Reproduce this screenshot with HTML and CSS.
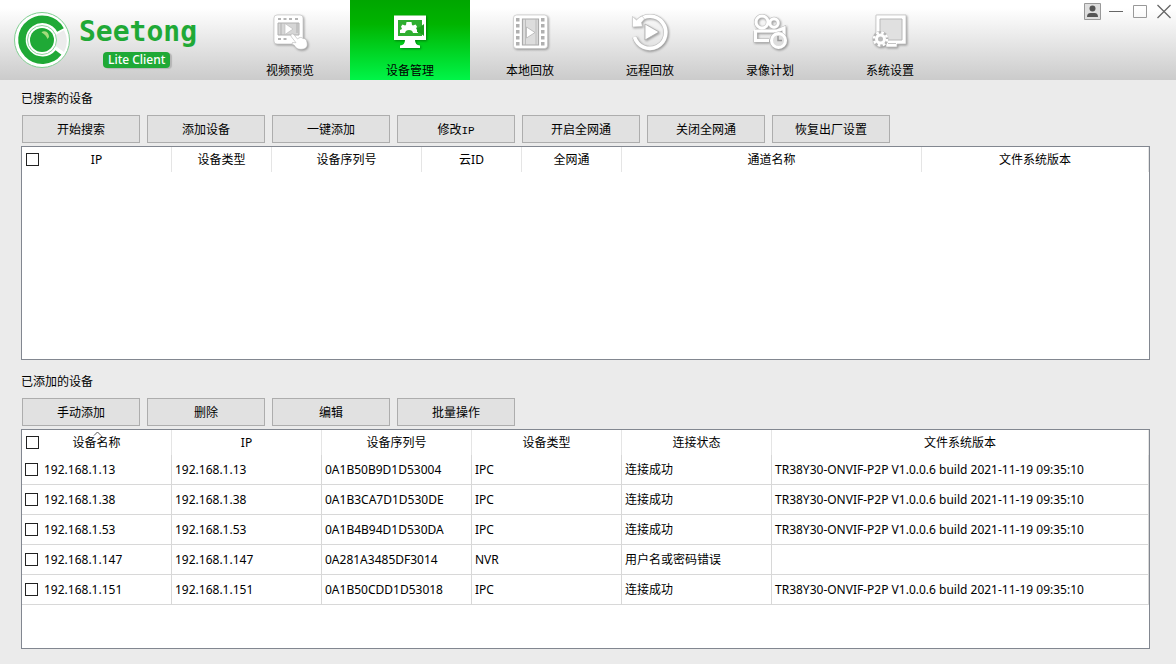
FILE: index.html
```html
<!DOCTYPE html>
<html lang="zh-CN">
<head>
<meta charset="utf-8">
<title>Seetong Lite Client</title>
<link rel="stylesheet" href="styles.css">
</head>
<body>
<header class="topbar">
  <div class="brand">
    <svg class="brand-mark" viewBox="0 0 56 56" aria-hidden="true">
      <circle cx="28" cy="28" r="27.5" fill="#fff" stroke="#7fcf90" stroke-width="1"/>
      <path d="M33 28 L50 18 A24 24 0 0 1 50 40 Z" fill="#ececec"/>
      <path d="M46.500 18 A20.500 20.500 0 1 0 44.500 40.500" fill="none" stroke="#1fa936" stroke-width="7.500"/>
      <circle cx="28" cy="28" r="14.5" fill="#fff" stroke="#8ed39c" stroke-width="1"/>
      <circle cx="28" cy="28" r="12" fill="#1fa936"/>
      <path d="M27.500 20.500 Q29 18.500 32 19.500 Q35 21 35 25 L33.500 27 Q32 22.500 27.500 20.500 Z" fill="#a5dc7c"/>
    </svg>
    <div class="brand-text">
      <span class="brand-name">Seetong</span>
      <span class="brand-tag">Lite Client</span>
    </div>
  </div>
  <nav class="nav">
    <button class="nav-item" type="button">
      <svg class="nav-icon" viewBox="0 0 48 48" aria-hidden="true">
        <rect x="8" y="7" width="29" height="29" rx="3" fill="#fff" stroke="#c4c4c4" stroke-width=".7"/>
        <path d="M12 10h3v2h-3zM17.500 10h3v2h-3zM23 10h3v2h-3zM29 10h3v2h-3zM12 30h3v2h-3zM17.500 30h3v2h-3z" fill="#b5b5b5"/>
        <path d="M12 15h21v12H12z" fill="#d6d6d6" stroke="#b0b0b0"/>
        <path d="M15 15v12M31 15v10" stroke="#b0b0b0"/>
        <path d="M19 15.500v11l8-5.500z" fill="#fff" stroke="#b5b5b5" stroke-width=".6"/>
        <path d="M25 26.500c1.500-1.500 3 0 4 1.500l2.500 3c2-2 4-2 5.500-.5 2.500 0 3.500 1 4 4 1 4-1 6-3.500 6.500-5 1-7.500-.5-9-3.500-1-1-3-1-2-3l3.500.2-4.500-5.700q-1-1-.5-2.500z" fill="#fff" stroke="#b5b5b5" stroke-width=".6"/>
      </svg>
      <span>视频预览</span>
    </button>
    <button class="nav-item active" type="button" aria-current="page">
      <svg class="nav-icon" viewBox="0 0 48 48" aria-hidden="true">
        <path d="M8 7.500h32v24.500H29q0 5 5 5.500v2.500H14v-2.500q5-.5 5-5.500H8z" fill="#fff"/>
        <path d="M12 12h24v16H12z" fill="#2fae30"/>
        <path d="M15 18.500l1.500-2 2.500 1 1-.5.500-3h5l.5 3 1 .5 2.500-1 1.500 2-1 2.500 2 1v3h-5q-.5-3-4-3t-4 3h-5v-3l2-1z" fill="#fff"/>
        <path d="M31 20l3-1 4-3v12l-4-3-3-1z" fill="#1a9f1c"/>
      </svg>
      <span>设备管理</span>
    </button>
    <button class="nav-item" type="button">
      <svg class="nav-icon" viewBox="0 0 48 48" aria-hidden="true">
        <rect x="7.500" y="7" width="34" height="33.500" rx="3" fill="#fff" stroke="#c4c4c4" stroke-width=".7"/>
        <path d="M16.500 11h16v26h-16z" fill="#ddd" stroke="#aaa" stroke-width="1.200"/>
        <path d="M19.500 11v26M30 11v26" stroke="#b5b5b5" stroke-width=".8"/>
        <path d="M10 10h3.500v3.500H10zM10 16h3.500v3.500H10zM10 22h3.500v3.500H10zM10 28h3.500v3.500H10zM10 34h3.500v3.500H10zM35 10h3.500v3.500H35zM35 16h3.500v3.500H35zM35 22h3.500v3.500H35zM35 28h3.500v3.500H35zM35 34h3.500v3.500H35z" fill="#b0b0b0"/>
        <path d="M20.500 19v11l8.500-5.500z" fill="#fff" stroke="#aaa" stroke-width=".7"/>
      </svg>
      <span>本地回放</span>
    </button>
    <button class="nav-item" type="button">
      <svg class="nav-icon" viewBox="0 0 48 48" aria-hidden="true">
        <path d="M12 13.500A16 16 0 1 1 8.500 29" fill="none" stroke="#bcbcbc" stroke-width="4.600"/>
        <path d="M12 13.500A16 16 0 1 1 8.500 29" fill="none" stroke="#fff" stroke-width="3.600"/>
        <path d="M6.500 8.500l4 3.500q3-3 5.500-4l2.500 3-3 3.500 1 4-10 .500z" fill="#fff" stroke="#bcbcbc" stroke-width=".6"/>
        <path d="M19 16v16l14-8z" fill="#fff" stroke="#aaa" stroke-width=".8"/>
      </svg>
      <span>远程回放</span>
    </button>
    <button class="nav-item" type="button">
      <svg class="nav-icon" viewBox="0 0 48 48" aria-hidden="true">
        <g fill="none" stroke="#bcbcbc" stroke-width="4">
          <circle cx="16" cy="14" r="6"/><circle cx="28" cy="15" r="4.200"/>
          <path d="M9 23h22l7-3v8M9.500 23v9.500H23"/>
        </g>
        <g fill="none" stroke="#fff" stroke-width="3">
          <circle cx="16" cy="14" r="6"/><circle cx="28" cy="15" r="4.200"/>
          <path d="M8 23h23l7-3v8M9.500 23v9.500H23"/>
        </g>
        <circle cx="32.500" cy="32.500" r="7" fill="#ddd" stroke="#b0b0b0" stroke-width="4"/>
        <circle cx="32.500" cy="32.500" r="7" fill="#ddd" stroke="#fff" stroke-width="3"/>
        <path d="M32 28v4.500h4" fill="none" stroke="#999" stroke-width="1.500"/>
      </svg>
      <span>录像计划</span>
    </button>
    <button class="nav-item" type="button">
      <svg class="nav-icon" viewBox="0 0 48 48" aria-hidden="true">
        <path d="M10 7h30v29H31v3H20v-3H10z" fill="#fff" stroke="#bcbcbc" stroke-width=".7"/>
        <path d="M14 11h22v21H14z" fill="#e0e0e0" stroke="#b8b8b8"/>
        <path d="M22 35.500h8" stroke="#c4c4c4"/>
        <circle cx="14.500" cy="31" r="5.500" fill="none" stroke="#b5b5b5" stroke-width="5"/>
        <circle cx="14.500" cy="31" r="6.500" fill="none" stroke="#fff" stroke-width="2.500" stroke-dasharray="2.550 2.550"/>
        <circle cx="14.500" cy="31" r="4" fill="#bbb" stroke="#fff" stroke-width="3"/>
      </svg>
      <span>系统设置</span>
    </button>
  </nav>
  <div class="window-controls">
    <button type="button" aria-label="用户">
      <svg viewBox="0 0 18 18"><path d="M1.500.500h16v16h-16z" fill="#dedede" stroke="#999"/><circle cx="9.500" cy="5.500" r="3" fill="#555"/><path d="M4 14q0-4 3.500-4h4q3.500 0 3.500 4z" fill="#555"/></svg>
    </button>
    <button type="button" aria-label="最小化">
      <svg viewBox="0 0 18 18"><path d="M2 8.500h14" stroke="#666"/></svg>
    </button>
    <button type="button" aria-label="最大化">
      <svg viewBox="0 0 18 18"><path d="M2.500 2.500h13v12h-13z" fill="none" stroke="#999"/></svg>
    </button>
    <button type="button" aria-label="关闭">
      <svg viewBox="0 0 18 18"><path d="M2.500 2l13 13M15.500 2l-13 13" stroke="#666" stroke-width="1.300"/></svg>
    </button>
  </div>
</header>

<main class="content">
  <section class="panel panel-search">
    <h2 class="panel-title">已搜索的设备</h2>
    <div class="actions">
      <button type="button">开始搜索</button>
      <button type="button">添加设备</button>
      <button type="button">一键添加</button>
      <button type="button">修改<span class="latin">IP</span></button>
      <button type="button">开启全网通</button>
      <button type="button">关闭全网通</button>
      <button type="button">恢复出厂设置</button>
    </div>
    <div class="grid-box">
      <table class="grid">
        <colgroup><col class="w150"><col class="w100"><col class="w150"><col class="w100"><col class="w100"><col class="w300"><col></colgroup>
        <thead>
          <tr>
            <th><div class="head-check"><input type="checkbox" aria-label="全选"><span>IP</span></div></th>
            <th>设备类型</th><th>设备序列号</th><th>云ID</th><th>全网通</th><th>通道名称</th><th>文件系统版本</th>
          </tr>
        </thead>
      </table>
    </div>
  </section>

  <section class="panel panel-added">
    <h2 class="panel-title">已添加的设备</h2>
    <div class="actions">
      <button type="button">手动添加</button>
      <button type="button">删除</button>
      <button type="button">编辑</button>
      <button type="button">批量操作</button>
    </div>
    <div class="grid-box">
      <table class="grid">
        <colgroup><col class="w150"><col class="w150"><col class="w150"><col class="w150"><col class="w150"><col></colgroup>
        <thead>
          <tr>
            <th aria-sort="ascending"><div class="head-check"><input type="checkbox" aria-label="全选"><span>设备名称</span><svg class="sort" viewBox="0 0 9 5" aria-hidden="true"><path d="M1 4.500l3.500-3.500 3.500 3.500" fill="none" stroke="#555"/></svg></div></th>
            <th>IP</th><th>设备序列号</th><th>设备类型</th><th>连接状态</th><th>文件系统版本</th>
          </tr>
        </thead>
        <tbody>
          <tr><td><label><input type="checkbox">192.168.1.13</label></td><td>192.168.1.13</td><td>0A1B50B9D1D53004</td><td>IPC</td><td>连接成功</td><td>TR38Y30-ONVIF-P2P V1.0.0.6 build 2021-11-19 09:35:10</td></tr>
          <tr><td><label><input type="checkbox">192.168.1.38</label></td><td>192.168.1.38</td><td>0A1B3CA7D1D530DE</td><td>IPC</td><td>连接成功</td><td>TR38Y30-ONVIF-P2P V1.0.0.6 build 2021-11-19 09:35:10</td></tr>
          <tr><td><label><input type="checkbox">192.168.1.53</label></td><td>192.168.1.53</td><td>0A1B4B94D1D530DA</td><td>IPC</td><td>连接成功</td><td>TR38Y30-ONVIF-P2P V1.0.0.6 build 2021-11-19 09:35:10</td></tr>
          <tr><td><label><input type="checkbox">192.168.1.147</label></td><td>192.168.1.147</td><td>0A281A3485DF3014</td><td>NVR</td><td>用户名或密码错误</td><td></td></tr>
          <tr><td><label><input type="checkbox">192.168.1.151</label></td><td>192.168.1.151</td><td>0A1B50CDD1D53018</td><td>IPC</td><td>连接成功</td><td>TR38Y30-ONVIF-P2P V1.0.0.6 build 2021-11-19 09:35:10</td></tr>
        </tbody>
      </table>
    </div>
  </section>
</main>
</body>
</html>
```
FILE: styles.css
```css
* { box-sizing: border-box; }

body {
  margin: 0;
  min-height: 100vh;
  display: flex;
  flex-direction: column;
  background: #ebebeb;
  color: #000;
  font: 12px/16px "Noto Sans", "Noto Sans CJK SC", sans-serif;
}

button { font: inherit; color: inherit; }

.topbar {
  display: flex;
  height: 80px;
  background: linear-gradient(#fff, #fff 10%, #cbcbcb);
}

.brand {
  display: flex;
  width: 230px;
  padding: 12px 0 0 14px;
  gap: 9px;
}
.brand-mark { width: 56px; height: 56px; flex: none; }
.brand-text { display: flex; flex-direction: column; align-items: flex-start; }
.brand-name {
  color: #1fa936;
  font: bold 28px/40px "DejaVu Sans Mono", monospace;
}
.brand-tag {
  margin-left: 24px;
  padding: 0 5px;
  border-radius: 4px;
  background: #1fa936;
  box-shadow: 2px 1px 1px #b5b5b5;
  color: #fff;
  font-weight: 500;
}

.nav { display: flex; }
.nav-item {
  display: flex;
  flex-direction: column;
  align-items: center;
  gap: 7px;
  width: 120px;
  padding: 8px 0 0;
  border: 0;
  background: none;
}
.nav-item.active { background: linear-gradient(#00a600, #00b400 30%, #00f548); }
.nav-icon {
  width: 48px;
  height: 48px;
  filter: drop-shadow(1px 1px 1px rgba(0, 0, 0, .35));
}

.window-controls {
  display: flex;
  align-items: flex-start;
  gap: 6px;
  margin-left: auto;
  padding: 3px 3px 0 0;
}
.window-controls button {
  width: 18px;
  height: 18px;
  padding: 0;
  border: 0;
  background: none;
}
.window-controls svg { display: block; width: 18px; height: 18px; }

.content {
  flex: 1;
  display: flex;
  flex-direction: column;
  gap: 14px;
  padding: 11px 26px 15px 21px;
}
.panel { display: flex; flex-direction: column; }
.panel-search { flex: 1 0 269px; }
.panel-added { flex: 1 0 275px; }
.panel-title { margin: 0 0 8px; font: inherit; }

.actions { display: flex; gap: 7px; padding: 0 1px; margin-bottom: 3px; }
.actions button {
  width: 118px;
  height: 28px;
  padding: 2px 0 0;
  border: 1px solid #adadad;
  background: #e1e1e1;
}
.latin { font-family: "Liberation Mono", monospace; font-size: 11px; }

.grid-box { flex: 1; border: 1px solid #828790; background: #fff; }
.grid { width: 100%; table-layout: fixed; border-collapse: separate; border-spacing: 0; }
.w100 { width: 100px; }
.w150 { width: 150px; }
.w300 { width: 300px; }

.grid th {
  height: 25px;
  padding: 0;
  border-right: 1px solid #e5e5e5;
  font-weight: normal;
  text-align: center;
}
.grid td {
  height: 30px;
  padding: 0 3px;
  border-right: 1px solid #d8d8d8;
  border-bottom: 1px solid #d8d8d8;
  white-space: nowrap;
}

.head-check {
  position: relative;
  display: grid;
  grid-template-columns: 17px 1fr 17px;
  align-items: center;
}
.head-check input { justify-self: end; }
.sort { position: absolute; top: -4px; left: 50%; width: 9px; height: 5px; margin-left: -4px; }

.grid label { display: flex; align-items: center; gap: 6px; }
.grid input {
  appearance: none;
  width: 13px;
  height: 13px;
  margin: 0;
  border: 1px solid #222;
  background: #fff;
}
```
